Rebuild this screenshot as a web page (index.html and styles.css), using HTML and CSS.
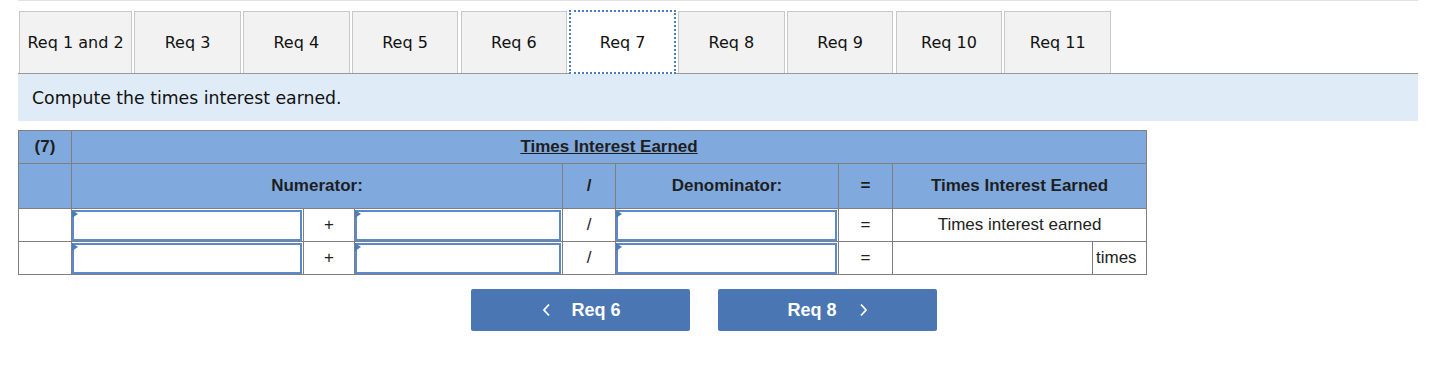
FILE: index.html
```html
<!DOCTYPE html>
<html lang="en">
<head>
    <meta charset="UTF-8">
    <title>Times Interest Earned</title>
    <link rel="stylesheet" href="styles.css">
</head>
<body>
    <div class="page">
        <div class="tabs">
            <div class="tab tab-wide">Req 1 and 2</div>
            <div class="tab">Req 3</div>
            <div class="tab">Req 4</div>
            <div class="tab">Req 5</div>
            <div class="tab">Req 6</div>
            <div class="tab active">Req 7</div>
            <div class="tab">Req 8</div>
            <div class="tab">Req 9</div>
            <div class="tab">Req 10</div>
            <div class="tab">Req 11</div>
        </div>

        <div class="instructions">Compute the times interest earned.</div>

        <table class="ratio">
            <colgroup>
                <col class="c-label">
                <col class="c-num">
                <col class="c-op">
                <col class="c-num2">
                <col class="c-op2">
                <col class="c-den">
                <col class="c-op3">
                <col class="c-res">
                <col class="c-unit">
            </colgroup>
            <tr class="head-top">
                <th>(7)</th>
                <th colspan="8"><u>Times Interest Earned</u></th>
            </tr>
            <tr class="head-cols">
                <th></th>
                <th colspan="3">Numerator:</th>
                <th>/</th>
                <th>Denominator:</th>
                <th>=</th>
                <th colspan="2">Times Interest Earned</th>
            </tr>
            <tr>
                <td></td>
                <td class="field"><div class="box"><span class="flag"></span><input type="text"></div></td>
                <td>+</td>
                <td class="field"><div class="box"><span class="flag"></span><input type="text"></div></td>
                <td>/</td>
                <td class="field"><div class="box"><span class="flag"></span><input type="text"></div></td>
                <td>=</td>
                <td colspan="2">Times interest earned</td>
            </tr>
            <tr>
                <td></td>
                <td class="field"><div class="box"><span class="flag"></span><input type="text"></div></td>
                <td>+</td>
                <td class="field"><div class="box"><span class="flag"></span><input type="text"></div></td>
                <td>/</td>
                <td class="field"><div class="box"><span class="flag"></span><input type="text"></div></td>
                <td>=</td>
                <td></td>
                <td class="unit">times</td>
            </tr>
        </table>

        <div class="nav">
            <button class="nav-btn nav-prev">
                <svg width="10" height="14" viewBox="0 0 10 14"><path d="M7 1.5 L2 7 L7 12.5" fill="none" stroke="#fff" stroke-width="1.8"/></svg>
                <span>Req 6</span>
            </button>
            <button class="nav-btn">
                <span>Req 8</span>
                <svg width="10" height="14" viewBox="0 0 10 14"><path d="M3 1.5 L8 7 L3 12.5" fill="none" stroke="#fff" stroke-width="1.8"/></svg>
            </button>
        </div>
    </div>
</body>
</html>
```

FILE: styles.css
```css
body {
    margin: 0;
    font-family: "DejaVu Sans", Verdana, sans-serif;
    color: #111;
    background: #fff;
}
.page {
    width: 1400px;
    margin-left: 18px;
    border-top: 1px solid #e2e2e2;
}
.tabs {
    display: flex;
    gap: 2.2px;
    padding: 10px 0 0 1px;
    border-bottom: 1px solid #999;
    height: 62px;
}
.tab {
    width: 106.6px;
    box-sizing: border-box;
    border: 1px solid #c8c8c8;
    border-bottom: none;
    background: #f2f2f2;
    display: flex;
    align-items: center;
    justify-content: center;
    font-size: 16px;
    color: #111;
}
.tab-wide {
    width: 113px;
}
.tab.active {
    background: #fff;
    border: 2px dotted #4a7ebb;
    height: 64px;
    margin-top: -1px;
    position: relative;
    z-index: 1;
}
.instructions {
    background: #dfebf7;
    height: 47px;
    padding-left: 14px;
    display: flex;
    align-items: center;
    font-size: 17.3px;
    color: #111;
}
.ratio {
    margin-top: 9px;
    width: 1128px;
    border-collapse: collapse;
    table-layout: fixed;
    font-family: "Liberation Sans", Arial, sans-serif;
    font-size: 17px;
    color: #222;
}
.c-label { width: 53px; }
.c-num { width: 232px; }
.c-op { width: 51px; }
.c-num2 { width: 208px; }
.c-op2 { width: 53px; }
.c-den { width: 223px; }
.c-op3 { width: 54px; }
.c-res { width: 200px; }
.c-unit { width: 54px; }
.ratio th,
.ratio td {
    border: 1px solid #7f7f7f;
    text-align: center;
    padding: 0;
}
.ratio th {
    background: #80aade;
    font-weight: bold;
    color: #1e1e1e;
}
.head-top th {
    height: 32px;
}
.head-cols th {
    height: 44px;
}
.ratio td {
    height: 32px;
    background: #fff;
}
.ratio td.unit {
    text-align: left;
    padding-left: 3px;
}
.ratio td.field {
    padding: 0 1px 0 0;
}
.box {
    position: relative;
    height: 31px;
}
.box input {
    width: 100%;
    height: 31px;
    box-sizing: border-box;
    border: 2px solid #5b89cb;
    margin: 0;
    padding: 0 4px;
    background: #fff;
}
.flag {
    position: absolute;
    left: 0;
    top: 0;
    width: 0;
    height: 0;
    border-top: 4px solid transparent;
    border-bottom: 4px solid transparent;
    border-left: 6px solid #4a7ebb;
}
.nav {
    display: flex;
    gap: 28px;
    margin: 14px 0 0 453px;
}
.nav-btn {
    width: 219px;
    height: 42px;
    border: none;
    border-radius: 2px;
    background: #4a76b4;
    color: #fff;
    font-family: "Liberation Sans", Arial, sans-serif;
    font-size: 18px;
    font-weight: bold;
    display: flex;
    align-items: center;
    justify-content: center;
    gap: 21px;
}
.nav-prev {
    gap: 19px;
    padding-left: 8px;
}
```
